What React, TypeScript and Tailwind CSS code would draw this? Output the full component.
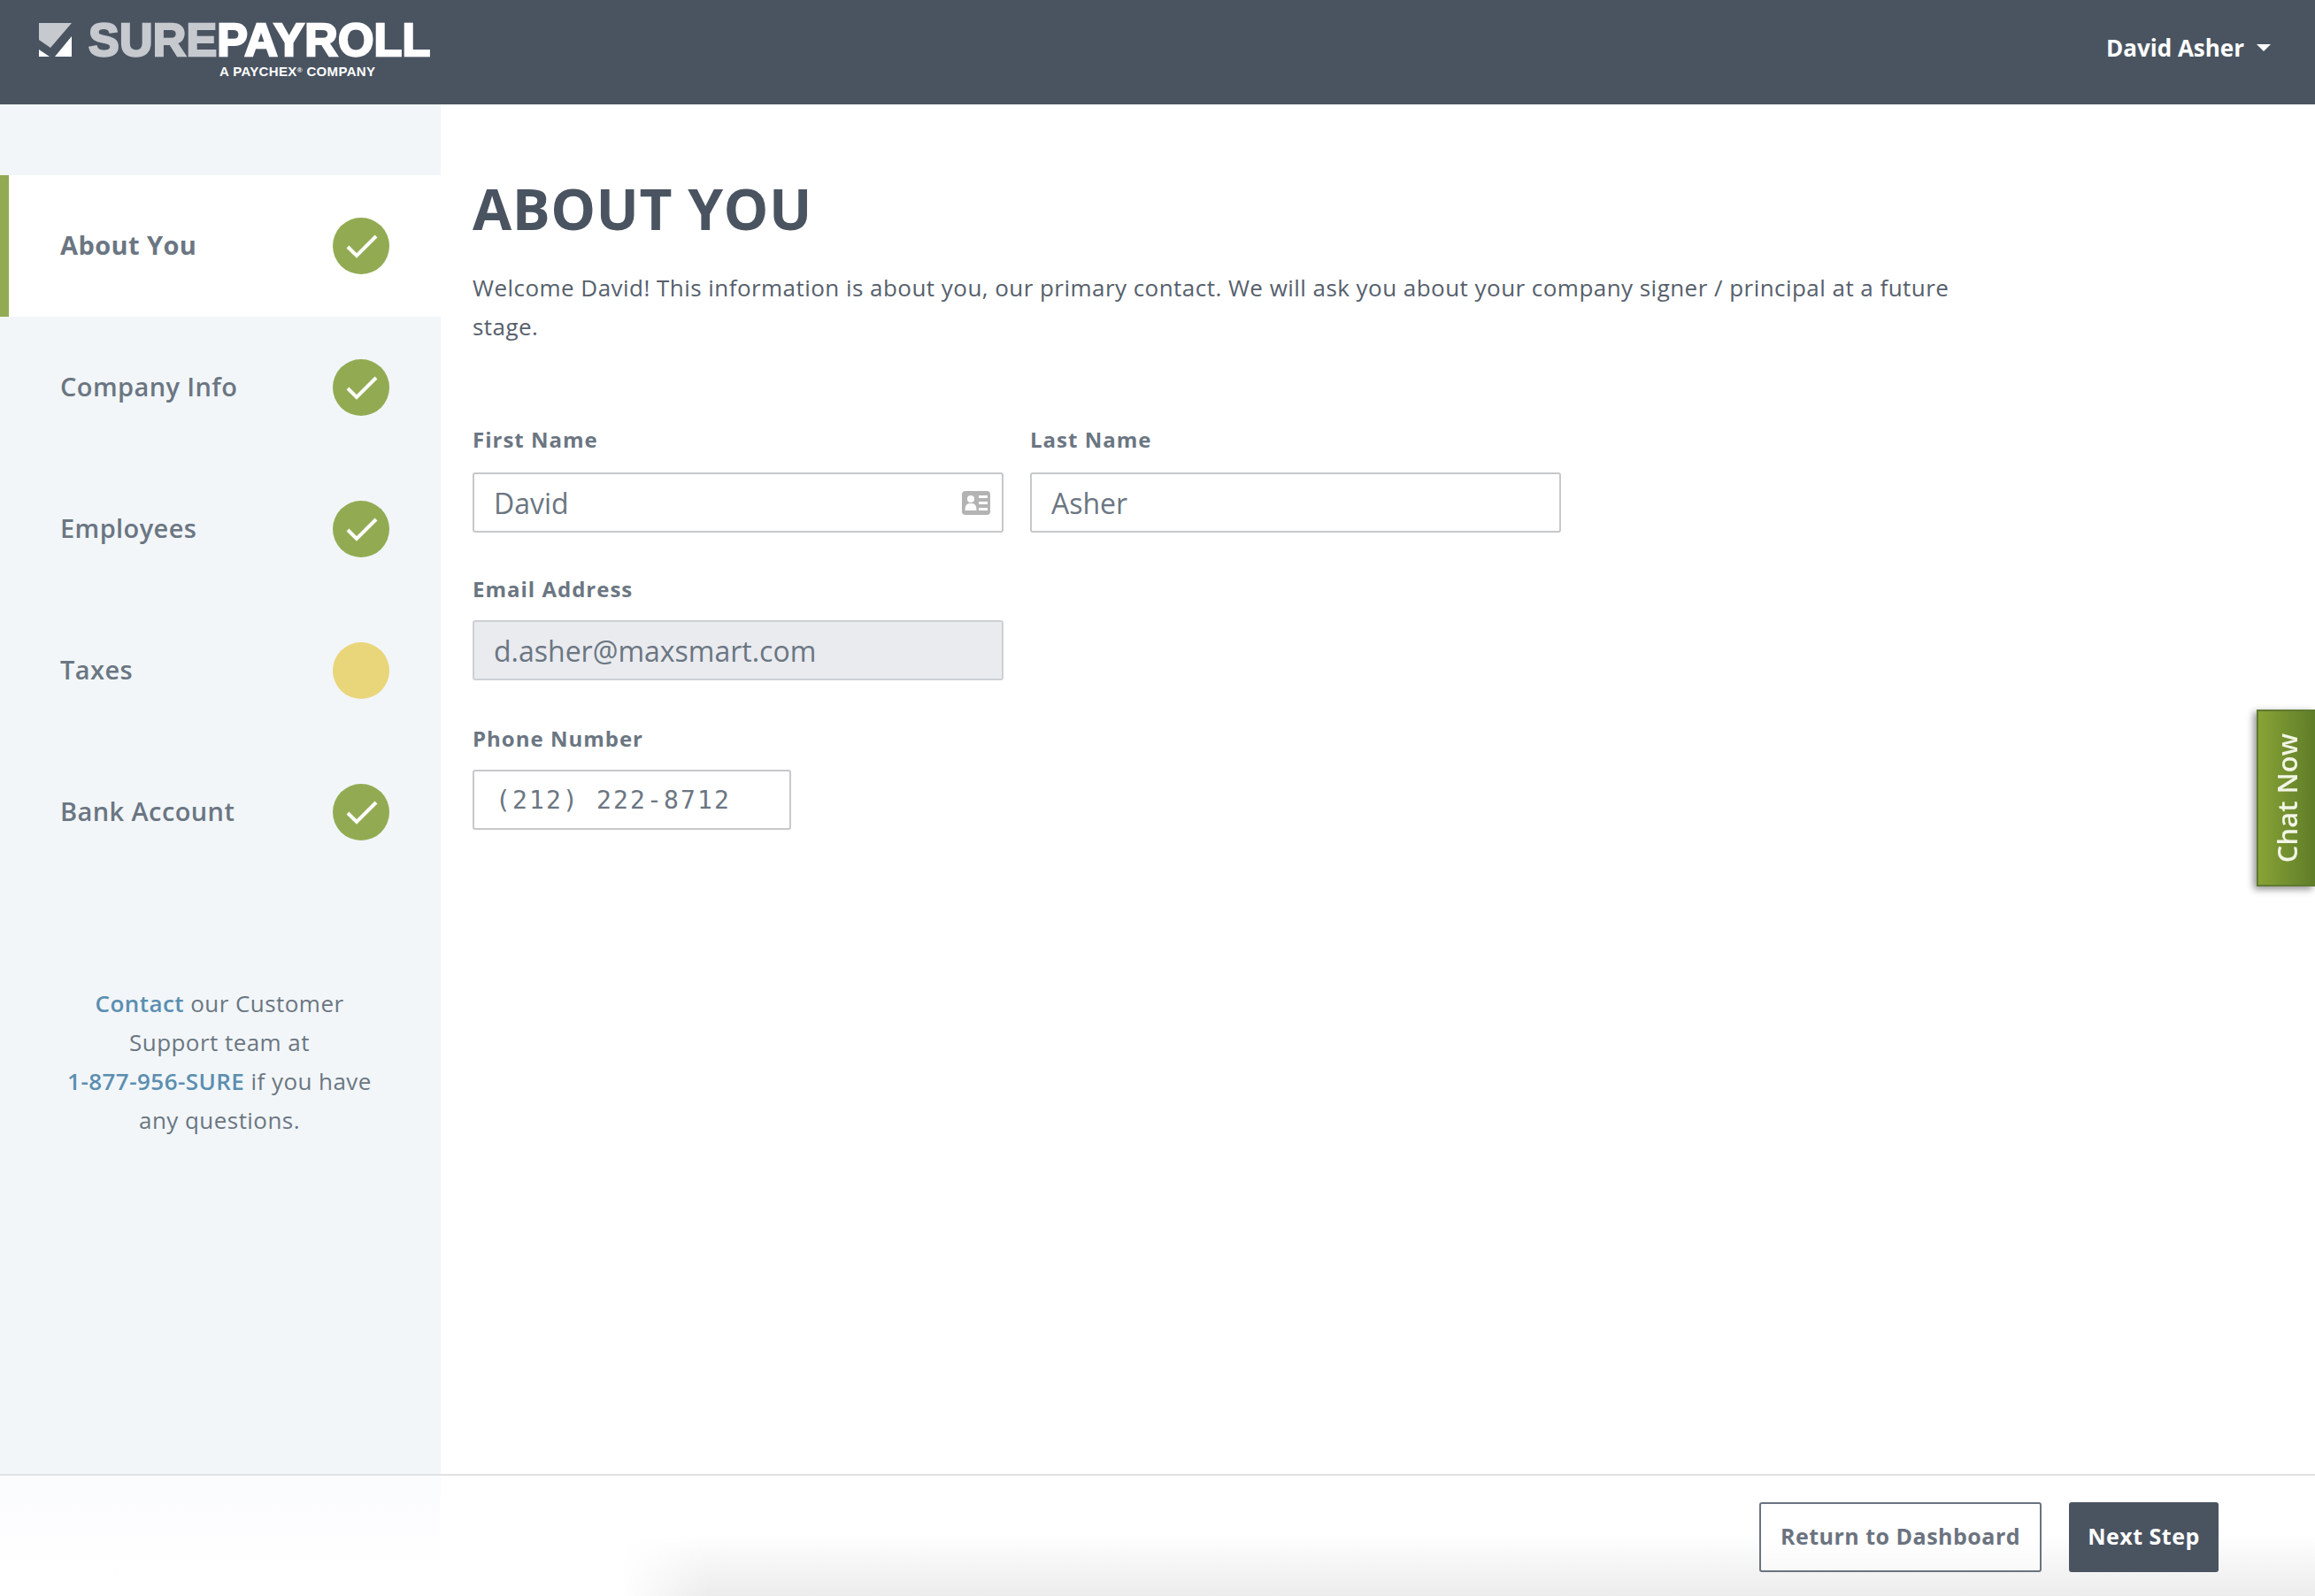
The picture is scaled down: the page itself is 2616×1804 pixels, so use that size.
import React from "react";

const OS = "font-['Open_Sans',sans-serif]";

function Check() {
  return (
    <div className="w-16 h-16 rounded-full bg-[#92ab52] flex items-center justify-center">
      <svg width="36" height="28" viewBox="0 0 36 28" fill="none" className="ml-0.5">
        <path d="M2 15 L12 25 L34 3" stroke="#fff" strokeWidth="4" />
      </svg>
    </div>
  );
}

function Step({ label, active, pending }: { label: string; active?: boolean; pending?: boolean }) {
  return (
    <div className={`h-40 flex items-center justify-between pr-[58px] ${active ? "bg-white border-l-[10px] border-[#92ab52] pl-[58px]" : "pl-[68px]"}`}>
      <span className={`text-[29px] pb-[3px] tracking-[0.4px] text-[#6b7682] ${active ? "font-bold" : "font-semibold"}`}>{label}</span>
      {pending ? <div className="w-16 h-16 rounded-full bg-[#e9d67a]" /> : <Check />}
    </div>
  );
}

function Field({ label, value, className, icon, disabled, mono, tight }: { label: string; value: string; className: string; icon?: boolean; disabled?: boolean; mono?: boolean; tight?: boolean }) {
  return (
    <div className={className}>
      <div className={`text-[24px] leading-[34px] font-bold tracking-[1px] text-[#6b7682] ${tight ? "mb-[18px]" : "mb-[20px]"}`}>{label}</div>
      <div className={`h-[68px] border-2 rounded-[3px] flex items-center justify-between ${disabled ? "bg-[#e9ebef] border-[#cdd0d4]" : "bg-white border-[#c6c8ca]"} ${mono ? "pl-[24px] pt-[2px]" : "pl-[22px] pr-[13px]"}`}>
        <span className={mono ? "font-['DejaVu_Sans_Mono',monospace] text-[28px] tracking-[2.15px] text-[#6b7682]" : "text-[32px] pt-[1px] text-[#6b7682]"}>{value}</span>
        {icon && (
          <svg width="32" height="27" viewBox="0 0 32 27">
            <rect width="32" height="27" rx="4" fill="#b3b3b3" />
            <circle cx="10" cy="9" r="4" fill="#fff" />
            <path d="M3.5 22 C3.5 15 6 14 10 14 C14 14 16.5 15 16.5 22 Z" fill="#fff" />
            <rect x="19" y="5" width="10" height="3" fill="#fff" />
            <rect x="19" y="12" width="10" height="3" fill="#fff" />
            <rect x="19" y="19" width="10" height="3" fill="#fff" />
          </svg>
        )}
      </div>
    </div>
  );
}

export default function App() {
  return (
    <div className={`relative w-[2616px] h-[1804px] overflow-hidden bg-white flex flex-col ${OS}`}>
      <header className="h-[118px] shrink-0 bg-[#4a5461] flex items-start justify-between">
        <div className="flex items-start pl-11 pt-[26px] gap-[19px]">
          <svg width="37" height="38" viewBox="0 0 37 38" className="shrink-0">
            <path d="M0 0 H37 L13 28 L0 19 Z" fill="#c6c9ce" />
            <path d="M37 15 V38 H18 Z" fill="#fff" />
            <path d="M0 30 L12 38 H0 Z" fill="#fff" />
          </svg>
          <div className="font-['Liberation_Sans',sans-serif] font-bold">
            <div className="text-[52px] leading-[38px] tracking-[0.2px] [-webkit-text-stroke:2.4px_currentColor] text-white whitespace-nowrap">
              <span className="text-[#c6c9ce]">SURE</span>PAYROLL
            </div>
            <div className="text-[15px] leading-[16px] mt-[9px] ml-[148px] tracking-[0.35px] text-white whitespace-nowrap">
              A PAYCHEX<sup className="text-[8px]">®</sup> COMPANY
            </div>
          </div>
        </div>
        <div className="flex items-center gap-[14px] mt-[31px] mr-[50px] h-[46px]">
          <span className="text-[26px] font-bold tracking-[0px] text-white">David Asher</span>
          <span className="w-0 h-0 border-x-[8px] border-t-[8px] border-x-transparent border-t-white" />
        </div>
      </header>

      <div className="flex-1 flex min-h-0">
        <aside className="w-[498px] shrink-0 bg-[#f2f6f9] pt-20">
          <Step label="About You" active />
          <Step label="Company Info" />
          <Step label="Employees" />
          <Step label="Taxes" pending />
          <Step label="Bank Account" />
          <div className="mt-[114px] pl-[69px] pr-[71px] text-center text-[26px] leading-[44px] tracking-[0.45px] text-[#6b7682]">
            <span className="font-semibold text-[#5b8eb0]">Contact</span> our Customer Support team at <span className="font-semibold text-[#5b8eb0] whitespace-nowrap">1-877-956-SURE</span> if you have any questions.
          </div>
        </aside>

        <main className="flex-1 pl-9 pt-[74px]">
          <h1 className="text-[64px] leading-[88px] font-bold tracking-[0.5px] text-[#4a5461]">ABOUT YOU</h1>
          <p className="w-[1700px] mt-[23px] text-[26px] leading-[44px] tracking-[0.46px] text-[#56606c]">
            Welcome David! This information is about you, our primary contact. We will ask you about your company signer / principal at a future stage.
          </p>
          <div className="flex gap-[30px] mt-[89px]">
            <Field label="First Name" value="David" className="w-[600px]" icon />
            <Field label="Last Name" value="Asher" className="w-[600px]" />
          </div>
          <Field label="Email Address" value="d.asher@maxsmart.com" className="w-[600px] mt-[47px]" disabled tight />
          <Field label="Phone Number" value="(212) 222-8712" className="w-[360px] mt-[49px]" mono tight />
        </main>
      </div>

      <footer className="relative h-[138px] shrink-0 border-t-2 border-[#e0e1e2] bg-white flex items-start justify-end gap-[31px] pt-[30px] pr-[109px]">
        <div className="absolute left-0 top-0 w-[498px] h-[118px] bg-gradient-to-b from-[#fafbfd] to-white" />
        <div className="absolute left-[700px] right-0 bottom-0 h-[70px] bg-gradient-to-b from-white to-[#ececec] [mask-image:linear-gradient(to_right,transparent,black_100px)]" />
        <button className="relative h-[79px] w-[319px] pb-[2px] border-2 border-[#6b7380] rounded-[3px] bg-white/50 text-[25px] font-bold tracking-[0.5px] text-[#6b7380]">Return to Dashboard</button>
        <button className="relative h-[79px] w-[169px] pb-[2px] rounded-[3px] bg-[#4a5461] text-[25px] font-bold tracking-[0.5px] text-white">Next Step</button>
      </footer>

      <div className="absolute left-[2550px] top-[802px] w-[66px] h-[200px] border-2 border-r-0 border-[#5f7a30] bg-gradient-to-r from-[#88a336] to-[#5f7d28] shadow-[-3px_3px_8px_rgba(0,0,0,0.45)] flex items-center justify-center">
        <span className="[writing-mode:vertical-rl] rotate-180 text-[31px] font-semibold text-[#f2f5e6] whitespace-nowrap">Chat Now</span>
      </div>
    </div>
  );
}
